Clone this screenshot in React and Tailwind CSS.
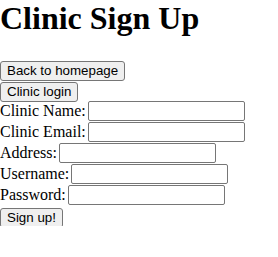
const FIELDS = [
  ['Clinic Name:', 'text'],
  ['Clinic Email:', 'email'],
  ['Address:', 'text'],
  ['Username:', 'text'],
  ['Password:', 'password'],
]

const btn =
  'h-[20px] rounded-[3px] border border-[#767676] bg-[#efefef] px-[6px] text-[13.33px] leading-[16px] text-black [font-family:"Liberation_Sans",Arial,sans-serif]'

export default function App() {
  return (
    <div className="bg-white text-[16px] text-black [font-family:'Liberation_Serif','Times_New_Roman',serif]">
      <h1 className="mb-[21.44px] text-[32px] font-bold leading-[37px]">Clinic Sign Up</h1>
      <div className="h-[21px]">
        <button className={btn}>Back to homepage</button>
      </div>
      <div className="h-[21px]">
        <button className={btn}>Clinic login</button>
      </div>
      <form>
        {FIELDS.map(([label, type]) => (
          <div key={label} className="flex h-[21px] items-center">
            <label>{label}</label>
            <input
              type={type}
              className="ml-[2px] h-[20px] w-[157px] rounded-[2px] border border-[#767676] bg-white px-[2px]"
            />
          </div>
        ))}
        <div className="h-[21px]">
          <button type="button" className={btn}>Sign up!</button>
        </div>
      </form>
    </div>
  )
}
